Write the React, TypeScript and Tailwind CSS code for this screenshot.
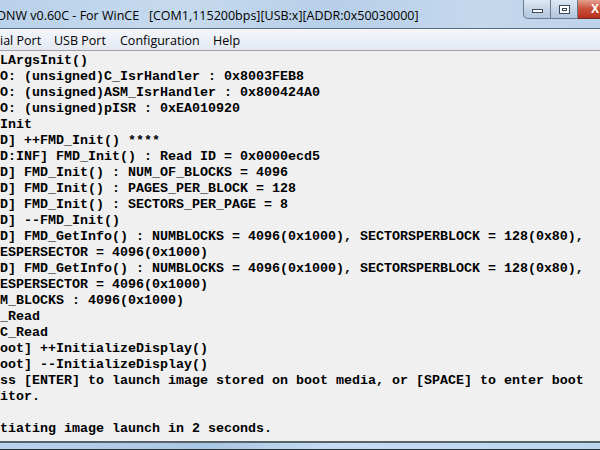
import React from "react";

const lines = [
  "LArgsInit()",
  "O: (unsigned)C_IsrHandler : 0x8003FEB8",
  "O: (unsigned)ASM_IsrHandler : 0x800424A0",
  "O: (unsigned)pISR : 0xEA010920",
  "Init",
  "D] ++FMD_Init() ****",
  "D:INF] FMD_Init() : Read ID = 0x0000ecd5",
  "D] FMD_Init() : NUM_OF_BLOCKS = 4096",
  "D] FMD_Init() : PAGES_PER_BLOCK = 128",
  "D] FMD_Init() : SECTORS_PER_PAGE = 8",
  "D] --FMD_Init()",
  "D] FMD_GetInfo() : NUMBLOCKS = 4096(0x1000), SECTORSPERBLOCK = 128(0x80),",
  "ESPERSECTOR = 4096(0x1000)",
  "D] FMD_GetInfo() : NUMBLOCKS = 4096(0x1000), SECTORSPERBLOCK = 128(0x80),",
  "ESPERSECTOR = 4096(0x1000)",
  "M_BLOCKS : 4096(0x1000)",
  "_Read",
  "C_Read",
  "oot] ++InitializeDisplay()",
  "oot] --InitializeDisplay()",
  "ss [ENTER] to launch image stored on boot media, or [SPACE] to enter boot",
  "itor.",
  "",
  "tiating image launch in 2 seconds.",
];

export default function App() {
  return (
    <div className="w-[600px] h-[450px] overflow-hidden flex flex-col bg-[#f0f0f0]">
      {/* Title bar */}
      <div className="h-[28px] flex items-start bg-[linear-gradient(90deg,#b9d1ea_0%,#c6daee_30%,#b7cfe8_55%,#c4d8ed_80%,#bdd3ea_100%)] relative">
        <div
          className="flex-1 h-[28px] flex items-center -ml-[3px] pt-[5px] text-[12.5px] text-black whitespace-pre"
          style={{ fontFamily: '"Open Sans", "Noto Sans", sans-serif' }}
        >
          DNW v0.60C - For WinCE{"   "}[COM1,115200bps][USB:x][ADDR:0x50030000]
        </div>
        <div className="flex h-[19px] mr-0">
          <div className="w-[28px] h-[19px] border border-[#6b7c90] border-t-0 rounded-bl-[5px] bg-[linear-gradient(180deg,#dfe9f4,#c5d5e6_50%,#b3c6dc)] flex items-center justify-center">
            <div className="w-[11px] h-[4px] border border-[#3c4a5c] bg-white mt-[3px]" />
          </div>
          <div className="w-[27px] h-[19px] border-b border-r border-[#6b7c90] bg-[linear-gradient(180deg,#dfe9f4,#c5d5e6_50%,#b3c6dc)] flex items-center justify-center">
            <div className="w-[11px] h-[9px] border border-[#3c4a5c] bg-white flex items-center justify-center">
              <div className="w-[5px] h-[3px] border border-[#3c4a5c]" />
            </div>
          </div>
          <div className="w-[22px] h-[19px] border-b border-[#6b2a20] bg-[linear-gradient(180deg,#e5a08f,#c9503a_50%,#b8301c)] flex items-center justify-end pr-[1px]">
            <span className="text-white text-[12px] font-bold leading-none" style={{ fontFamily: '"Liberation Sans", sans-serif' }}>X</span>
          </div>
        </div>
      </div>
      {/* Menu bar */}
      <div className="h-[23px] border-t border-[#5c6d80] border-b border-b-[#a0a0a0] bg-[linear-gradient(180deg,#f4f6fb,#e3e8f2)] flex items-center pt-[3px] text-[12.5px] text-black"
        style={{ fontFamily: '"Open Sans", "Noto Sans", sans-serif' }}>
        <span className="w-[54px]">ial Port</span>
        <span className="w-[66px]">USB Port</span>
        <span className="w-[93px]">Configuration</span>
        <span>Help</span>
      </div>
      {/* Terminal */}
      <div className="flex-1 bg-[#f0f0f0] pt-[2px] overflow-hidden">
        {lines.map((l, i) => (
          <div
            key={i}
            className="h-[16px] leading-[16px] text-[13.33px] font-bold text-black whitespace-pre"
            style={{ fontFamily: '"Liberation Mono", "DejaVu Sans Mono", monospace' }}
          >
            {l}
          </div>
        ))}
      </div>
      {/* Bottom border */}
      <div className="h-[2px] bg-[#56646a]" />
      <div className="h-[6px] bg-[linear-gradient(90deg,#b9d3ee,#a9c6e4_35%,#c6dcf2_55%,#bcd6f0)]" />
      <div className="h-[1px] bg-[#2a3238]" />
    </div>
  );
}
